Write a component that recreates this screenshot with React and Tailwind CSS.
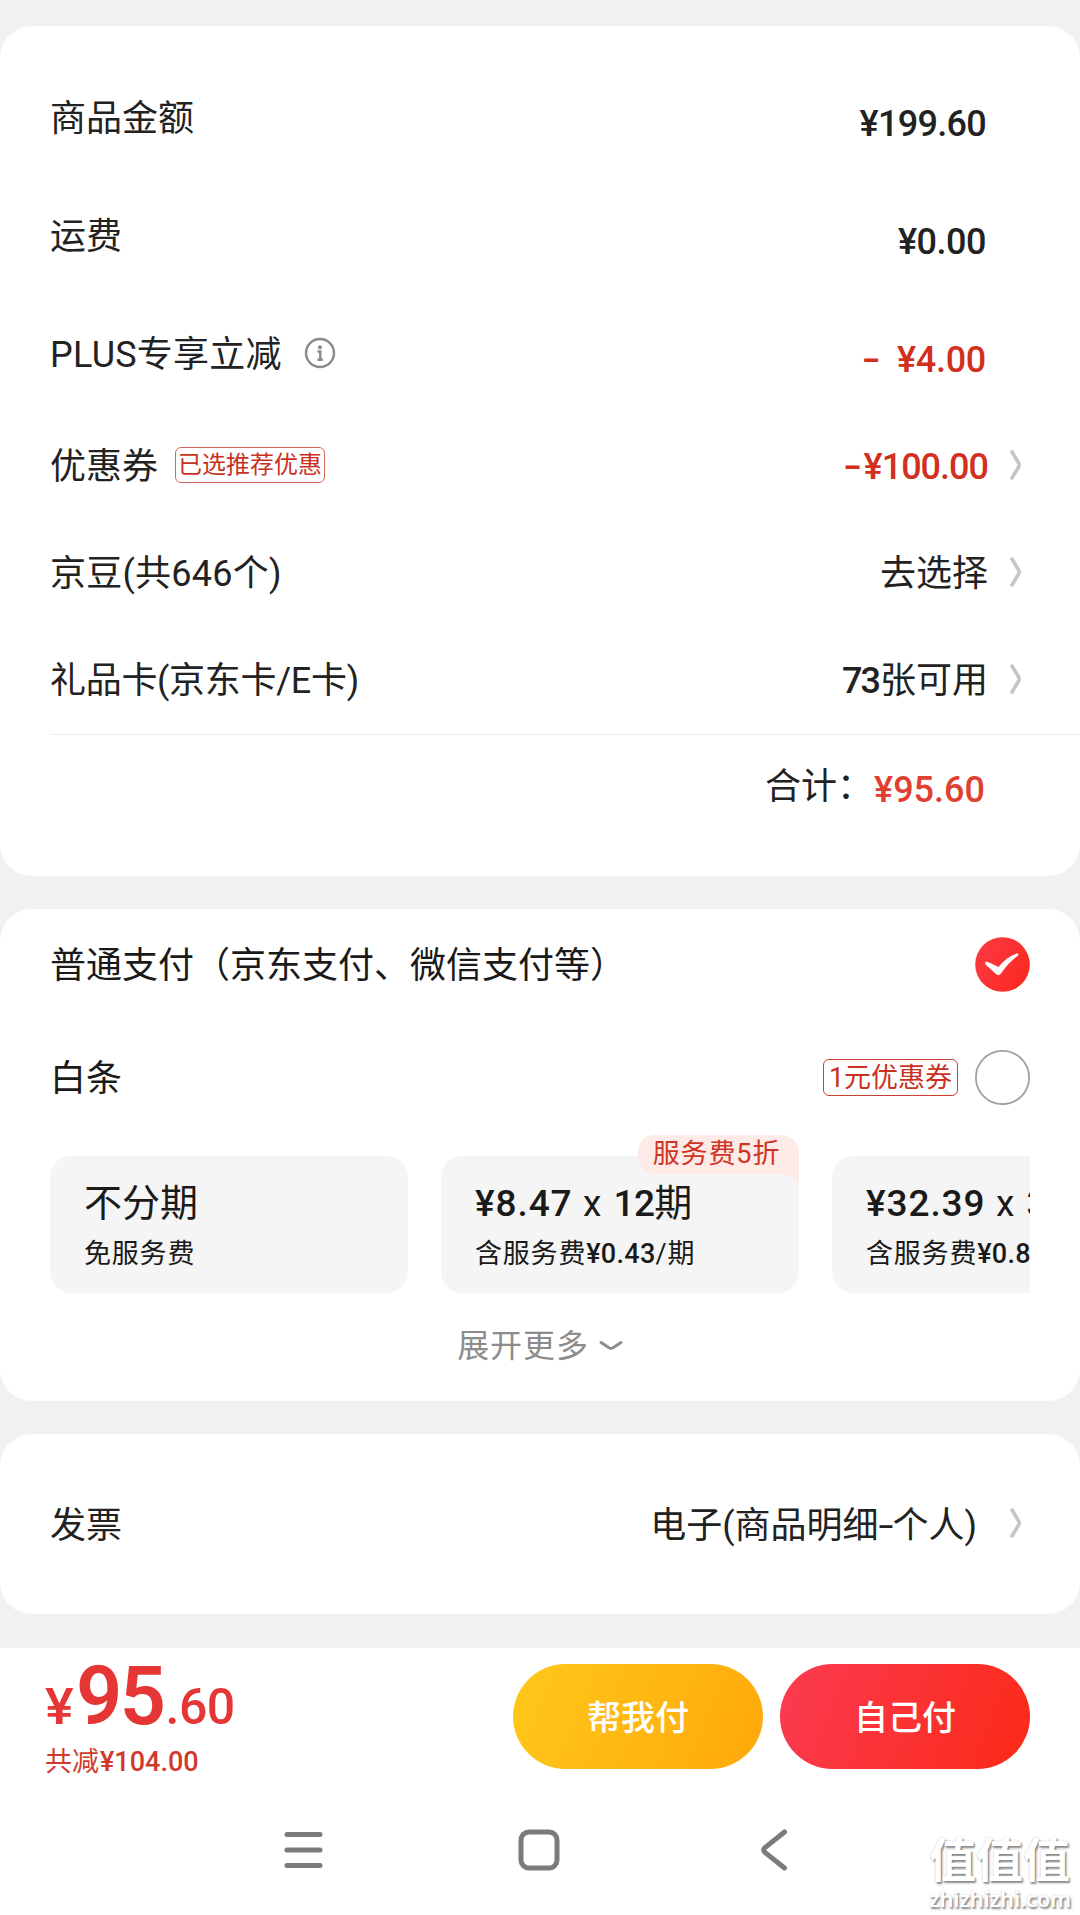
import React from "react";
import { useState } from "react";

const Arrow = () => {
  return (
    <svg width="12" height="30" viewBox="0 0 12 30" fill="none" className="ml-[22px] mr-[58px] mb-[3px] shrink-0">
      <path d="M2 2L8.6 13Q9.8 15 8.6 17L2 28" stroke="#c6c6c6" strokeWidth="3.6" strokeLinecap="round" />
    </svg>
  );
};

const Price = ({ children, className = "" }) => {
  return <span className={`font-medium ${className}`}>{children}</span>;
};

const Minus = ({ className = "" }) => {
  return <span className={`inline-block scale-x-[1.5] ${className}`}>-</span>;
};

const Row = ({ label, children, className = "" }) => {
  return (
    <div className={`flex items-center justify-between pl-[50px] ${className}`}>
      <div className="flex items-center">{label}</div>
      <div className="flex items-center">{children}</div>
    </div>
  );
};

const Radio = ({ checked, onClick }) => {
  return (
    <button onClick={onClick} className="w-[56px] h-[56px] mr-[50px] shrink-0">
      {checked ? (
        <svg width="56" height="56" viewBox="0 0 56 56">
          <defs>
            <linearGradient id="check" x1="0" y1="0" x2="1" y2="0.6">
              <stop offset="0" stopColor="#fd3b49" />
              <stop offset="1" stopColor="#fb2a20" />
            </linearGradient>
          </defs>
          <circle cx="28.500" cy="27.500" r="27.300" fill="url(#check)" />
          <path
            d="M12.5 24.500Q10 25.500 12 28L22 37Q24.500 39.500 27 36.500Q34 26 44 18.500Q45.500 16 42.500 16.500Q32 20.500 24.500 30Q20 27.500 12.500 24.500Z"
            fill="#fff"
          />
        </svg>
      ) : (
        <svg width="56" height="56" viewBox="0 0 56 56">
          <circle cx="28.500" cy="27.500" r="26.6" fill="#fff" stroke="#a0a0a0" strokeWidth="1.8" />
        </svg>
      )}
    </button>
  );
};

const Summary = () => {
  return (
    <section className="h-[850px] bg-white rounded-[32px] pt-[34px]">
      <Row label="商品金额" className="h-[118px]">
        <Price className="mr-[94px] mt-[10px] tracking-[-0.7px]">¥199.60</Price>
      </Row>
      <Row label="运费" className="h-[118px]">
        <Price className="mr-[94px] mt-[10px] tracking-[-0.5px]">¥0.00</Price>
      </Row>
      <Row
        label={
          <>
            <span className="tracking-[0.25px]">PLUS专享立减</span>
            <svg width="32" height="32" viewBox="0 0 32 32" fill="none" className="ml-[22px] mb-[3px]">
              <circle cx="16" cy="16" r="14" stroke="#8a8a8a" strokeWidth="2.4" />
              <circle cx="16" cy="10.300" r="2" fill="#8a8a8a" />
              <path d="M13.500 14.500H16.300V22.500M13.500 22.800H18.800" stroke="#8a8a8a" strokeWidth="2.400" />
            </svg>
          </>
        }
        className="h-[117px]"
      >
        <Price className="mr-[94px] mt-[10px] tracking-[-0.3px] text-[#d22f1f]">
          <Minus className="mr-[17px] origin-right" />¥4.00
        </Price>
      </Row>
      <Row
        label={
          <>
            优惠券
            <span className="ml-[17px] w-[150px] h-[36px] mb-[3px] flex items-center justify-center rounded-[6px] border border-[#d4685a] text-[24px] text-[#c9321f]">
              已选推荐优惠
            </span>
          </>
        }
        className="h-[107px]"
      >
        <Price className="tracking-[-1px] text-[#d22f1f]">
          <Minus className="mr-[3px] origin-right" />¥100.00
        </Price>
        <Arrow />
      </Row>
      <Row label={<span className="tracking-[0.25px]">京豆(共646个)</span>} className="h-[107px]">
        <span>去选择</span>
        <Arrow />
      </Row>
      <Row label={<span className="tracking-[-0.3px]">礼品卡(京东卡/E卡)</span>} className="h-[107px]">
        <span className="font-medium tracking-[-2px] mr-[1px]">73</span>张可用
        <Arrow />
      </Row>
      <div className="ml-[50px] h-px bg-[#ececec]"></div>
      <div className="flex justify-end items-center h-[104px] pr-[95px]">
        <span className="mr-[1px]">合计：</span>
        <Price className="text-[#e0402f] mt-[6px]">¥95.60</Price>
      </div>
    </section>
  );
};

const Plan = ({ title, sub, tag }) => {
  return (
    <div className="relative w-[358px] h-[137px] shrink-0 rounded-[21px] bg-[#f5f5f5] pl-[34px] pt-[21px] whitespace-nowrap">
      {tag && (
        <div className="absolute right-0 top-[-21px] w-[161px] h-[50px]">
          <svg width="161" height="50" viewBox="0 0 161 50" className="absolute inset-0">
            <path d="M18 0H141Q161 0 161 20V50Q157 39 144 39H16Q0 37 0 20Q0 0 18 0Z" fill="#feeae7" />
          </svg>
          <div className="relative h-[39px] pr-[4px] flex items-center justify-center text-[27px] tracking-[0.9px] text-[#cf3524]">{tag}</div>
        </div>
      )}
      <div className="h-[52px] leading-[52px] text-[38px]">{title}</div>
      <div className="h-[50px] leading-[51px] text-[27px] tracking-[0.8px]">{sub}</div>
    </div>
  );
};

// count is the number of months, fee is charged on each one
const PlanTitle = ({ price, count }) => {
  return (
    <>
      <span className="font-medium text-[37px] tracking-[0.9px]">{price}</span>
      <span className="text-[37px] tracking-[1.4px]"> x </span>
      <span className="font-medium text-[37px] tracking-[-0.6px]">{count}</span>期
    </>
  );
};

const PlanFee = ({ fee }) => {
  return (
    <>
      含服务费<span className="font-medium tracking-[0.3px]">{fee}</span>/期
    </>
  );
};

const Payment = () => {
  const [method, setMethod] = useState("normal");

  return (
    <section className="h-[492px] mt-[33px] bg-white rounded-[32px] text-[#1a1a1a]">
      <Row label={<span className="mt-[2px]">普通支付（京东支付、微信支付等）</span>} className="h-[112px]">
        <Radio checked={method === "normal"} onClick={() => setMethod("normal")} />
      </Row>
      <Row label={<span className="mt-[2px]">白条</span>} className="h-[113px]">
        <span className="w-[135px] h-[37px] mr-[16px] pt-[2px] flex items-center justify-center rounded-[6px] border border-[#c9402f] text-[27px] text-[#c9321f]">
          1元优惠券
        </span>
        <Radio checked={method === "baitiao"} onClick={() => setMethod("baitiao")} />
      </Row>
      <div className="flex gap-[33px] ml-[50px] mr-[50px] pt-[22px] overflow-hidden">
        <Plan title="不分期" sub="免服务费" />
        <Plan title={<PlanTitle price="¥8.47" count="12" />} sub={<PlanFee fee="¥0.43" />} tag="服务费5折" />
        <Plan title={<PlanTitle price="¥32.39" count="3" />} sub={<PlanFee fee="¥0.86" />} />
      </div>
      <div className="h-[106px] flex items-center justify-center text-[32px] tracking-[0.9px] text-[#8c8c8c]">
        展开更多
        <svg width="24" height="12" viewBox="0 0 24 12" fill="none" className="ml-[10px]">
          <path d="M2 2.500L10 7.800Q12 9 14 7.800L22 2.500" stroke="#8c8c8c" strokeWidth="3" strokeLinecap="round" />
        </svg>
      </div>
    </section>
  );
};

const Footer = () => {
  return (
    <footer className="mt-[34px] h-[267px] bg-white">
      <div className="flex items-start justify-between pl-[45px] pr-[50px] pt-[16px] h-[140px]">
        <div className="text-[#e63535]">
          <div className="flex items-baseline h-[74px] leading-[65px] font-medium">
            <span className="inline-block w-[31px] origin-left scale-x-[1.08] text-[50px]">¥</span>
            <span className="text-[81px] font-semibold tracking-[-2.5px]">95</span>
            <span className="text-[50px] ml-[2px] tracking-[-0.5px]">.60</span>
          </div>
          <div className="h-[48px] leading-[49px] text-[27px] text-[#d03a2c]">
            共减<span className="ml-[1px] font-medium">¥104.00</span>
          </div>
        </div>
        <div className="flex gap-[17px] text-[34px] font-medium text-white">
          <button className="w-[250px] h-[105px] rounded-full pt-[2px] bg-[linear-gradient(112deg,#ffc81a,#ffa80b)]">帮我付</button>
          <button className="w-[250px] h-[105px] rounded-full pt-[2px] bg-[linear-gradient(112deg,#fb3b52,#fb2a17)]">自己付</button>
        </div>
      </div>
      <div className="flex items-center pl-[284px] h-[124px]">
        <svg width="39" height="42" viewBox="0 0 39 42" stroke="#7b7b7b" strokeWidth="5" strokeLinecap="round">
          <path d="M3 5.500H36M3 21H36M3 36.500H36" />
        </svg>
        <svg width="42" height="42" viewBox="0 0 42 42" fill="none" className="ml-[195px]">
          <rect x="3" y="3" width="36" height="36" rx="8" stroke="#7b7b7b" strokeWidth="5" />
        </svg>
        <svg width="28" height="42" viewBox="0 0 28 42" fill="none" className="ml-[200px]">
          <path d="M24.500 3L5 18.500Q2.500 21 5 23.500L24.500 39" stroke="#7b7b7b" strokeWidth="5" strokeLinecap="round" />
        </svg>
      </div>
    </footer>
  );
};

const App = () => {
  return (
    <div className="relative w-[1080px] h-[1915px] overflow-hidden bg-[#f1f1f1] pt-[26px] font-[Roboto,'Noto_Sans_CJK_SC',sans-serif] text-[36px] leading-none text-[#222]">
      <Summary />
      <Payment />
      <section className="h-[180px] mt-[33px] bg-white rounded-[32px]">
        <Row label={<span className="mt-[3px]">发票</span>} className="h-[180px]">
          <span className="mr-[11px] mt-[3px]">
            电子(商品明细<Minus className="mx-[2px]" />个人)
          </span>
          <Arrow />
        </Row>
      </section>
      <Footer />
      {/* site mark in the corner */}
      <div className="absolute left-[929px] top-[1833px] text-white [text-shadow:1.5px_1.5px_2px_#888,0_0_2px_#ccc]">
        <div className="h-[55px] leading-[55px] text-[47px] font-bold">值值值</div>
        <div className="h-[24px] leading-[20px] text-[22px] font-semibold tracking-[-0.2px] font-['Noto_Sans',sans-serif]">zhizhizhi.com</div>
      </div>
    </div>
  );
};

export default App;
